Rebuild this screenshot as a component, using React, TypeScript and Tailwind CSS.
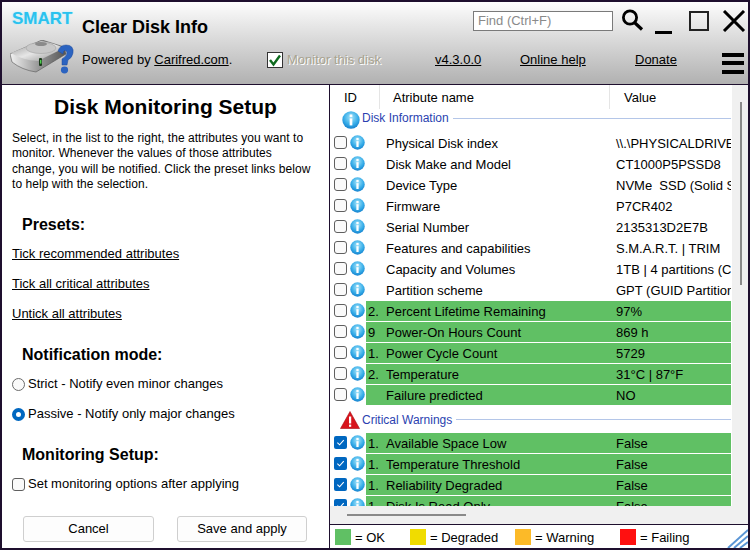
const rowsInfo: [string, string, string, string][] = [
  ["", "", "Physical Disk index", "\\\\.\\PHYSICALDRIVE0"],
  ["", "", "Disk Make and Model", "CT1000P5PSSD8"],
  ["", "", "Device Type", "NVMe  SSD (Solid State Drive)"],
  ["", "", "Firmware", "P7CR402"],
  ["", "", "Serial Number", "2135313D2E7B"],
  ["", "", "Features and capabilities", "S.M.A.R.T. | TRIM"],
  ["", "", "Capacity and Volumes", "1TB | 4 partitions (C: D: E:)"],
  ["", "", "Partition scheme", "GPT (GUID Partition Table)"],
  ["g", "2.", "Percent Lifetime Remaining", "97%"],
  ["g", "9", "Power-On Hours Count", "869 h"],
  ["g", "1.", "Power Cycle Count", "5729"],
  ["g", "2.", "Temperature", "31°C | 87°F"],
  ["g", "", "Failure predicted", "NO"],
];
const rowsCrit: [string, string, string][] = [
  ["1.", "Available Space Low", "False"],
  ["1.", "Temperature Threshold", "False"],
  ["1.", "Reliability Degraded", "False"],
  ["1.", "Disk Is Read Only", "False"],
];

function Info({ size = 15, className = "" }: { size?: number; className?: string }) {
  return (
    <svg width={size} height={size} viewBox="0 0 16 16" className={`shrink-0 ${className}`}>
      <defs>
        <radialGradient id="ig" cx="50%" cy="35%" r="70%">
          <stop offset="0%" stopColor="#a6e4fa" />
          <stop offset="60%" stopColor="#35ace8" />
          <stop offset="100%" stopColor="#0f78c8" />
        </radialGradient>
      </defs>
      <circle cx="8" cy="8" r="7.7" fill="url(#ig)" />
      <rect x="6.8" y="6.6" width="2.4" height="6.2" fill="#fff" />
      <rect x="6.8" y="3.1" width="2.4" height="2.2" fill="#fff" />
    </svg>
  );
}

function Check({ on, className = "" }: { on: boolean; className?: string }) {
  return on ? (
    <span className={`w-[13px] h-[13px] rounded-[2px] bg-[#0067c0] shrink-0 flex items-center justify-center ${className}`}>
      <svg width="9" height="9" viewBox="0 0 10 10"><path d="M1.5 5.2 L4 7.6 L8.6 2.4" stroke="#fff" strokeWidth="1.2" fill="none" /></svg>
    </span>
  ) : (
    <span className={`w-[13px] h-[13px] rounded-[3px] border border-[#5f5f5f] bg-[#fafafa] shrink-0 ${className}`} />
  );
}

function Row({ on, green, id, name, value }: { on: boolean; green: boolean; id: string; name: string; value: string }) {
  return (
    <div className="h-[21px] flex items-start pl-[4px] pr-[1px] shrink-0">
      <Check on={on} className="mt-[3px]" />
      <Info className="mt-[2px] ml-[3px] mr-[1px]" />
      <div className={`h-[20px] pt-[2px] flex-1 min-w-0 flex items-center overflow-hidden whitespace-pre ${green ? "bg-[#60c064]" : ""}`}>
        <span className="w-[20px] pl-[2px] shrink-0">{id}</span>
        <span className="w-[230px] shrink-0">{name}</span>
        <span className="shrink-0">{value}</span>
      </div>
    </div>
  );
}

function Group({ icon, label, className }: { icon: React.ReactNode; label: string; className: string }) {
  return (
    <div className={`flex items-center shrink-0 relative ${className}`}>
      <span className="w-[30px] flex justify-end shrink-0">{icon}</span>
      <span className="text-[12px] text-[#2b3fb0] pl-[2px]">{label}</span>
      <span className="flex-1 h-px bg-[#b4c6e8] ml-[4px] mr-[1px]" />
    </div>
  );
}

function Legend({ color, label, w }: { color: string; label: string; w: string }) {
  return (
    <div className={`flex items-center gap-[4px] ${w}`}>
      <span className={`w-[16px] h-[16px] ${color}`} />
      <span className="pt-[2px]">{label}</span>
    </div>
  );
}

function DiskLogo() {
  return (
    <svg width="64" height="34" viewBox="0 0 64 34">
      <defs>
        <linearGradient id="dside" x1="0" y1="0" x2="1" y2="0">
          <stop offset="0" stopColor="#f2f2f2" />
          <stop offset="0.5" stopColor="#9a9a9a" />
          <stop offset="1" stopColor="#555" />
        </linearGradient>
        <linearGradient id="dtop" x1="0" y1="0" x2="1" y2="1">
          <stop offset="0" stopColor="#8f8f8f" />
          <stop offset="0.5" stopColor="#e6e6e6" />
          <stop offset="1" stopColor="#8a8a8a" />
        </linearGradient>
      </defs>
      <path d="M0 14 L32 0 L54 7 L56 14 L26 32 Q12 30 2 22 Z" fill="url(#dside)" stroke="#555" strokeWidth="0.6" />
      <path d="M1 13 L31 1 Q44 3 54 8 L28 21 Q12 20 1 13 Z" fill="url(#dtop)" />
      <ellipse cx="31" cy="8" rx="15" ry="5.5" fill="#c8c8c8" stroke="#9a9a9a" strokeWidth="0.5" />
      <ellipse cx="31" cy="4" rx="6" ry="2" fill="#8a8a8a" />
      <rect x="29" y="18" width="3" height="8" rx="1" fill="#1c3a1c" />
      <rect x="30" y="20" width="1.4" height="3.6" fill="#4fd04f" />
      <path d="M48 11 Q50 5 56 5 Q64 5 63 13 Q62 18 58 20 L57 25 L52 25 L52 19 Q57 16 57 13 Q57 10 54.5 10.5 Q53 11 53 14 Z" fill="#2b63c0" stroke="#1e4a9a" strokeWidth="0.5" />
      <ellipse cx="54.5" cy="30" rx="3.6" ry="3.4" fill="#2b63c0" />
    </svg>
  );
}

export default function App() {
  return (
    <div className="w-[750px] h-[550px] bg-[#1e0f2e] p-[2px] overflow-hidden text-black text-[13px] font-['Liberation_Sans',Arial,sans-serif] flex flex-col">
      {/* Header */}
      <div className="h-[82px] shrink-0 flex bg-gradient-to-b from-[#fdfdfd] to-[#b1b1b1]">
        <div className="w-[80px] shrink-0 pl-[10px] pt-[6px]">
          <div className="text-[17px] leading-[22px] font-bold text-[#2ac2ee] [text-shadow:0_0_2px_#a8ecff]">SMART</div>
          <div className="mt-[10px] -ml-[2px]"><DiskLogo /></div>
        </div>
        <div className="flex-1 flex flex-col min-w-0">
          <div className="h-[38px] flex items-center mt-[6px]">
            <span className="w-[391px] text-[18px] font-bold shrink-0">Clear Disk Info</span>
            <span className="w-[140px] h-[20px] -mt-[12px] bg-white border border-[#7a7a7a] text-[#8a8a8a] text-[13px] leading-[18px] pl-[4px] shrink-0">Find (Ctrl+F)</span>
            <svg width="24" height="24" viewBox="0 0 24 24" className="ml-[7px] -mt-[14px] shrink-0">
              <circle cx="10" cy="9.5" r="6.6" fill="none" stroke="#000" strokeWidth="2.8" />
              <path d="M14.5 14.5 L22 21.5" stroke="#000" strokeWidth="3.2" />
            </svg>
            <span className="w-[17px] h-[3px] bg-black ml-[11px] mt-[10px] shrink-0" />
            <span className="w-[20px] h-[20px] border-[2.5px] border-[#222] ml-[17px] -mt-[13px] shrink-0" />
            <svg width="24" height="22" viewBox="0 0 24 22" className="ml-[13px] -mt-[13px] shrink-0">
              <path d="M2 1 L22 21 M22 1 L2 21" stroke="#000" strokeWidth="3" />
            </svg>
          </div>
          <div className="flex items-center mt-[-1px] h-[30px]">
            <span className="w-[185px] shrink-0">Powered by <span className="underline">Carifred.com</span>.</span>
            <span className="w-[16px] h-[16px] border border-[#333] bg-white shrink-0 flex items-center justify-center">
              <svg width="14" height="14" viewBox="0 0 14 14"><path d="M2 7 L5.5 11.5 L12 2.5" stroke="#0f6b1f" strokeWidth="2.4" fill="none" /></svg>
            </span>
            <span className="w-[152px] pl-[4px] shrink-0 text-[#a8a390] [text-shadow:1px_1px_0_#fff]">Monitor this disk</span>
            <span className="w-[85px] underline shrink-0">v4.3.0.0</span>
            <span className="w-[115px] underline shrink-0">Online help</span>
            <span className="w-[87px] underline shrink-0">Donate</span>
            <span className="w-[22px] mt-[6px] shrink-0 flex flex-col gap-[4.5px]">
              <span className="h-[4px] bg-black" />
              <span className="h-[4px] bg-black" />
              <span className="h-[4px] bg-black" />
            </span>
          </div>
        </div>
      </div>
      {/* Body */}
      <div className="h-px bg-[#1e0f2e] shrink-0" />
      <div className="flex-1 flex min-h-0 bg-white">
        {/* Left panel */}
        <div className="w-[328px] shrink-0 flex flex-col border-r border-[#1e0f2e]">
          <h1 className="text-[21px] leading-[24px] font-bold text-center mt-[10px]">Disk Monitoring Setup</h1>
          <p className="text-[12px] leading-[15.3px] tracking-[0.05px] pl-[10px] whitespace-nowrap mt-[12px]">
            Select, in the list to the right, the attributes you want to<br />
            monitor. Whenever the values of those attributes<br />
            change, you will be notified. Click the preset links below<br />
            to help with the selection.
          </p>
          <h2 className="text-[16px] leading-[20px] font-bold pl-[20px] mt-[23px]">Presets:</h2>
          <div className="pl-[10px] mt-[10px] flex flex-col gap-[12px] leading-[18px] underline">
            <span>Tick recommended attributes</span>
            <span>Tick all critical attributes</span>
            <span>Untick all attributes</span>
          </div>
          <h2 className="text-[16px] leading-[20px] font-bold pl-[20px] mt-[22px]">Notification mode:</h2>
          <div className="pl-[10px] mt-[11px] flex flex-col gap-[14px] leading-[16px]">
            <div className="flex items-center gap-[3px]">
              <span className="w-[13px] h-[13px] rounded-full border border-[#6b6b6b] bg-[#fafafa]" />
              <span>Strict - Notify even minor changes</span>
            </div>
            <div className="flex items-center gap-[3px]">
              <span className="w-[13px] h-[13px] rounded-full border-[4px] border-[#0067c0] bg-white" />
              <span>Passive - Notify only major changes</span>
            </div>
          </div>
          <h2 className="text-[16px] leading-[20px] font-bold pl-[20px] mt-[23px]">Monitoring Setup:</h2>
          <div className="pl-[10px] mt-[11px] flex items-center gap-[3px] leading-[16px]">
            <Check on={false} />
            <span>Set monitoring options after applying</span>
          </div>
          <div className="pl-[21px] mt-[24px] flex gap-[23px]">
            <span className="w-[131px] h-[26px] border border-[#cfcfcf] rounded-[3px] bg-[#fdfdfd] flex items-center justify-center">Cancel</span>
            <span className="w-[130px] h-[26px] border border-[#cfcfcf] rounded-[3px] bg-[#fdfdfd] flex items-center justify-center">Save and apply</span>
          </div>
        </div>
        {/* Right panel */}
        <div className="flex-1 flex flex-col min-w-0">
          <div className="flex-1 flex min-h-0">
            <div className="flex-1 min-w-0 flex flex-col overflow-hidden">
              <div className="h-[24px] shrink-0 flex items-center">
                <span className="w-[50px] pl-[14px] pt-[2px] h-full flex items-center border-r border-[#e5e5e5]">ID</span>
                <span className="w-[230px] pl-[13px] pt-[2px] h-full flex items-center border-r border-[#e5e5e5]">Atribute name</span>
                <span className="pl-[14px] pt-[2px] h-full flex items-center">Value</span>
              </div>
              <Group icon={<Info size={18} className="mt-[4px]" />} label="Disk Information" className="h-[24px] pb-[6px]" />
              {rowsInfo.map((r) => (
                <Row key={r[2]} on={false} green={r[0] === "g"} id={r[1]} name={r[2]} value={r[3]} />
              ))}
              <Group
                icon={
                  <svg width="20" height="18" viewBox="0 0 20 18">
                    <path d="M10 0.5 L19.5 17.5 L0.5 17.5 Z" fill="#d8141c" stroke="#a80c12" strokeWidth="0.6" />
                    <rect x="9" y="5.5" width="2.2" height="7" fill="#fff" />
                    <rect x="9" y="13.6" width="2.2" height="2.2" fill="#fff" />
                  </svg>
                }
                label="Critical Warnings"
                className="h-[27px]"
              />
              {rowsCrit.map((r) => (
                <Row key={r[1]} on green id={r[0]} name={r[1]} value={r[2]} />
              ))}
            </div>
            <div className="w-[16px] shrink-0 bg-[#f0f0f0] flex justify-center pt-[17px] pl-[1px]">
              <span className="w-[2px] h-[183px] bg-[#8a8a8a]" />
            </div>
          </div>
          <div className="h-[18px] shrink-0 bg-[#f0f0f0] pl-[17px] pt-[8px]">
            <div className="w-[119px] h-[2px] bg-[#8a8a8a]" />
          </div>
          <div className="h-px bg-[#1e0f2e] shrink-0" />
          <div className="h-[23px] shrink-0 flex items-center pl-[5px] relative">
            <Legend color="bg-[#60c064]" label="= OK" w="w-[75px]" />
            <Legend color="bg-[#f0dc00]" label="= Degraded" w="w-[105px]" />
            <Legend color="bg-[#fcba28]" label="= Warning" w="w-[105px]" />
            <Legend color="bg-[#ff1010]" label="= Failing" w="w-[90px]" />
            <svg width="22" height="20" viewBox="0 0 22 20" className="absolute right-0 bottom-0">
              <path d="M2 20 L22 2 M8 20 L22 8 M14 20 L22 14" stroke="#5b96d6" strokeWidth="2" />
            </svg>
          </div>
        </div>
      </div>
    </div>
  );
}
